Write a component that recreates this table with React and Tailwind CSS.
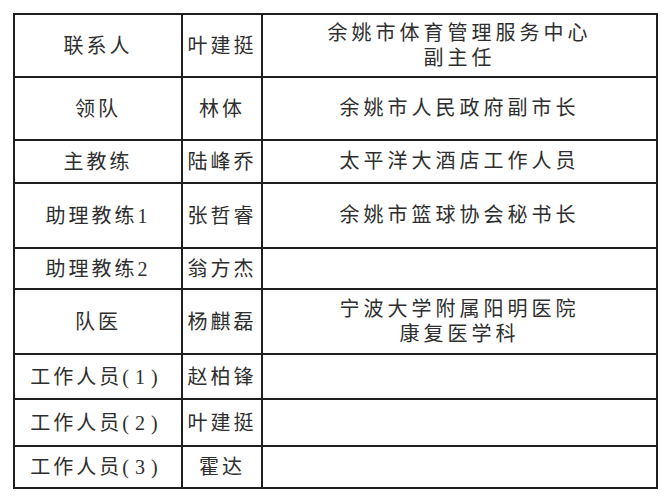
const rows = [
  { role: "联系人", name: "叶建挺", unit: ["余姚市体育管理服务中心", "副主任"], h: "h-[63px]" },
  { role: "领队", name: "林体", unit: ["余姚市人民政府副市长"], h: "h-[63px]" },
  { role: "主教练", name: "陆峰乔", unit: ["太平洋大酒店工作人员"], h: "h-[43px]" },
  { role: "助理教练1", name: "张哲睿", unit: ["余姚市篮球协会秘书长"], h: "h-[65px]" },
  { role: "助理教练2", name: "翁方杰", unit: [], h: "h-[41px]" },
  { role: "队医", name: "杨麒磊", unit: ["宁波大学附属阳明医院", "康复医学科"], h: "h-[65px]" },
  { role: "工作人员", num: "(1)", name: "赵柏锋", unit: [], h: "h-[45px]" },
  { role: "工作人员", num: "(2)", name: "叶建挺", unit: [], h: "h-[47px]" },
  { role: "工作人员", num: "(3)", name: "霍达", unit: [], h: "h-[42px]" },
];

const cell = "border-2 border-[#1e1e1e] text-center align-middle";

export default function App() {
  return (
    <div className="min-h-[500px] bg-white pt-[13px] pl-[13px] font-['Liberation_Serif','Noto_Sans_CJK_SC',serif] text-[20px] text-[#2e2e2e]">
      <table className="border-collapse">
        <tbody>
          {rows.map((r, i) => (
            <tr key={i} className={r.h}>
              <td className={`${cell} w-[168px] tracking-[3px]`}>
                {r.role}
                {r.num && <span className="tracking-[6px] pr-[2px]">{r.num}</span>}
              </td>
              <td className={`${cell} w-[80px] tracking-[3px]`}>{r.name}</td>
              <td className={`${cell} w-[395px] tracking-[4px] leading-[25px]`}>
                {r.unit.map((line, j) => (
                  <div key={j}>{line}</div>
                ))}
              </td>
            </tr>
          ))}
        </tbody>
      </table>
    </div>
  );
}
